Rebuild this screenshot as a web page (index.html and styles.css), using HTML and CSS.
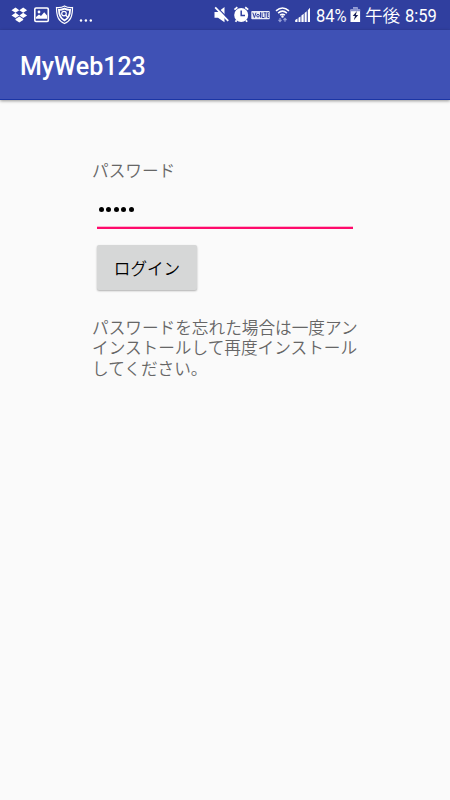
FILE: index.html
```html
<!DOCTYPE html>
<html lang="ja">
<head>
<meta charset="utf-8">
<title>MyWeb123</title>
<link rel="stylesheet" href="styles.css">
</head>
<body>
<header class="status">
  <div class="group notices">
    <svg width="18" height="30" viewBox="11 0 18 30" fill="#fff"><path d="M15.5 7.5 19.3 10.2 15.5 12.8 11.5 10.2ZM23.2 7.5 27.1 10.2 23.2 12.8 19.3 10.2ZM15.5 12.8 19.3 15.4 15.5 18.1 11.5 15.4ZM23.2 12.8 27.1 15.4 23.2 18.1 19.3 15.4ZM15.5 19 19.3 16.5 23.2 19V20L19.3 22.5 15.5 20Z"/></svg>
    <svg width="17" height="30" viewBox="33 0 17 30"><rect x="34.8" y="8" width="13.5" height="13.5" rx="1.2" fill="none" stroke="#fff" stroke-width="1.6"/><circle cx="39" cy="12" r="1.4" fill="#fff"/><path d="M36 18.7V17L39 14.5 41 16 44.2 12.3 47 15.5V18.7Z" fill="#fff"/></svg>
    <svg width="20" height="30" viewBox="54 0 20 30" fill="none" stroke="#fff"><path d="M56.5 7.5Q61 8 64.5 6 68 8 72.5 7.5C72.5 16 70.8 20.7 64.5 23.5 58.2 20.7 56.5 16 56.5 7.5Z" stroke-width="1.2"/><path d="M58.9 9.8Q62 9.9 64.5 8.6 67 9.9 70.1 9.8C70 15 68.8 18.4 64.5 20.5 60.2 18.4 59 15 58.9 9.8Z" stroke-width="1.8"/><circle cx="64" cy="13.6" r="2.3" stroke-width="1.2"/><path d="m65.7 15.3 2.1 2" stroke-width="1.5"/></svg>
    <svg width="14" height="30" viewBox="79 0 14 30" fill="#fff"><circle cx="81" cy="20.5" r="1.2"/><circle cx="85.9" cy="20.5" r="1.2"/><circle cx="90.8" cy="20.5" r="1.2"/></svg>
  </div>
  <div class="group system">
    <svg class="mute" width="17" height="30" viewBox="212 0 17 30"><path d="M213.5 12H217L223.5 7V22.3L217 17.7H213.5Z" fill="#fff"/><path d="m215.3 6.5 13 13.5" stroke="#303f9f" stroke-width="1.3"/><path d="m214.2 7.3 13 13.5" stroke="#fff" stroke-width="1.8"/></svg>
    <svg class="alarm" width="16" height="30" viewBox="232 0 16 30"><circle cx="240.2" cy="15" r="7" fill="#fff"/><path d="m233.4 9.6 3-2.4M244.2 7.2l3 2.4M235.7 20.2l-1.2 1.6M244.9 20.2l1.2 1.6" stroke="#fff" stroke-width="1.8"/><path d="M240.2 10.5V15.5H244" fill="none" stroke="#303f9f" stroke-width="1.5"/></svg>
    <svg class="volte" width="19" height="30" viewBox="250 0 19 30"><rect x="250.3" y="11" width="18.4" height="8.2" rx=".8" fill="#fff" fill-opacity=".9"/><path d="m251.8 12.7 1.6 4.8 1.6-4.8M261.1 12.5v5h2.2M262.6 12.8h3M264.1 12.8v4.8M268 12.8h-1.7v4.6h1.7M266.3 15h1.5" fill="none" stroke="#303f9f"/><circle cx="257" cy="15.7" r="1.3" fill="none" stroke="#303f9f"/><path d="M259.5 12.2v5.5" stroke="#303f9f"/></svg>
    <svg class="wifi" width="16" height="30" viewBox="274 0 16 30" fill="none" stroke="#fff" stroke-width="1.5"><path d="M275 10.9Q281.5 5 288 10.9M277.1 13.1Q281.5 9.1 285.9 13.1M279.1 15.2Q281.5 13.2 283.9 15.2"/><circle cx="281.5" cy="16.6" r=".5" fill="#fff"/><path d="M279 18v3.5M277.5 19.8l1.5 1.7 1.5-1.7M284 21.8v-3.5M282.5 20l1.5-1.7 1.5 1.7" stroke="#98a2da" stroke-width="1.2"/></svg>
    <svg class="signal" width="17" height="30" viewBox="294 0 17 30" fill="#fff"><path d="M294.2 22v-2l2.3-1.5V22ZM297.5 22v-4.2l2-1.4V22ZM300.4 22v-6.4l2.3-1.8V22Z"/><path d="M303.6 22v-9l2.1-1.8V22ZM306.8 22V10.2l2.2-2.5V22Z"/></svg>
    <span class="percent"><span class="narrow">84%</span></span>
    <svg class="battery" width="11" height="30" viewBox="349 0 11 30"><path d="M349.5 9.5h2.5V7.3h4.5v2.2h2.6V22h-9.6Z" fill="#fff"/><path d="M352 7.3h4.5v2.2h2.6v1.7h-9.6V9.5h2.5Z" fill="#8791cf"/><path d="m356 11-4.3 5h2.3l-1.2 4.2 4.4-5.3h-2.4Z" fill="#182057"/></svg>
    <span class="ampm">午後</span>
    <span class="clock"><span class="narrow">8:59</span></span>
  </div>
</header>
<div class="appbar"><h1>MyWeb123</h1></div>
<main>
  <label for="pw">パスワード</label>
  <div class="field" id="pw"><i></i><i></i><i></i><i></i><i></i></div>
  <button type="button">ログイン</button>
  <p>パスワードを忘れた場合は一度アン<br>インストールして再度インストール<br>してください。</p>
</main>
</body>
</html>
```
FILE: styles.css
```css
* { box-sizing: border-box; }
body {
  margin: 0;
  height: 800px;
  overflow: hidden;
  background: #fafafa;
  color: #666;
  font-family: Roboto, "Noto Sans CJK JP", sans-serif;
}
svg { display: block; flex: none; }
.status {
  height: 30px;
  background: #303f9f;
  color: #fff;
  display: flex;
  justify-content: space-between;
  padding: 0 12px 0 11px;
}
.group { display: flex; align-items: center; }
.notices svg:nth-child(2) { margin-left: 4px; }
.notices svg:nth-child(3) { margin-left: 4px; }
.notices svg:nth-child(4) { margin-left: 5px; }
.alarm { margin-left: 3px; }
.volte { margin-left: 2px; }
.wifi { margin-left: 5px; }
.signal { margin-left: 4px; }
.percent, .clock { font-size: 19px; line-height: 30px; white-space: nowrap; }
.narrow { display: inline-block; transform: scaleX(.87); transform-origin: 0 50%; }
.percent { width: 31px; margin: 1px 3px 0 4px; }
.clock { width: 33px; margin: 1px 0 0 4px; }
.ampm {
  width: 36px;
  margin-left: 4px;
  white-space: nowrap;
  font: 350 17.6px/30px "Noto Sans CJK JP", sans-serif;
}
.appbar {
  height: 70px;
  padding-left: 20px;
  display: flex;
  align-items: center;
  background: #3f51b5;
  border-bottom: 1px solid #1b35a5;
  box-shadow: 0 1px 3px rgba(0, 0, 0, .4);
}
h1 {
  margin: 5px 0 0;
  color: #fff;
  font-size: 25px;
  font-weight: 500;
  line-height: 30px;
}
main {
  width: 266px;
  margin: 60px 0 0 92px;
  font: 350 16.65px/20.5px "Noto Sans CJK JP", sans-serif;
}
label { display: block; color: #666; }
.field {
  height: 48.5px;
  margin: 0 5px;
  padding: 26px 0 0 1.5px;
  border-bottom: 2px solid #ff0a6c;
  box-shadow: inset 0 -1px #fcb4cf;
  display: flex;
  gap: 2.5px;
}
.field i { width: 5px; height: 5px; border-radius: 50%; background: #000; }
button {
  display: block;
  width: 100px;
  height: 45px;
  margin: 16px 0 0 5px;
  padding: 0;
  border: 0;
  border-radius: 2px;
  background: #d6d7d7;
  color: #000;
  font: 350 16.6px/20px "Noto Sans CJK JP", sans-serif;
  box-shadow: 0 1px 2px rgba(0, 0, 0, .3);
}
p { margin: 26.5px 0 0; color: #666; white-space: nowrap; }
```
